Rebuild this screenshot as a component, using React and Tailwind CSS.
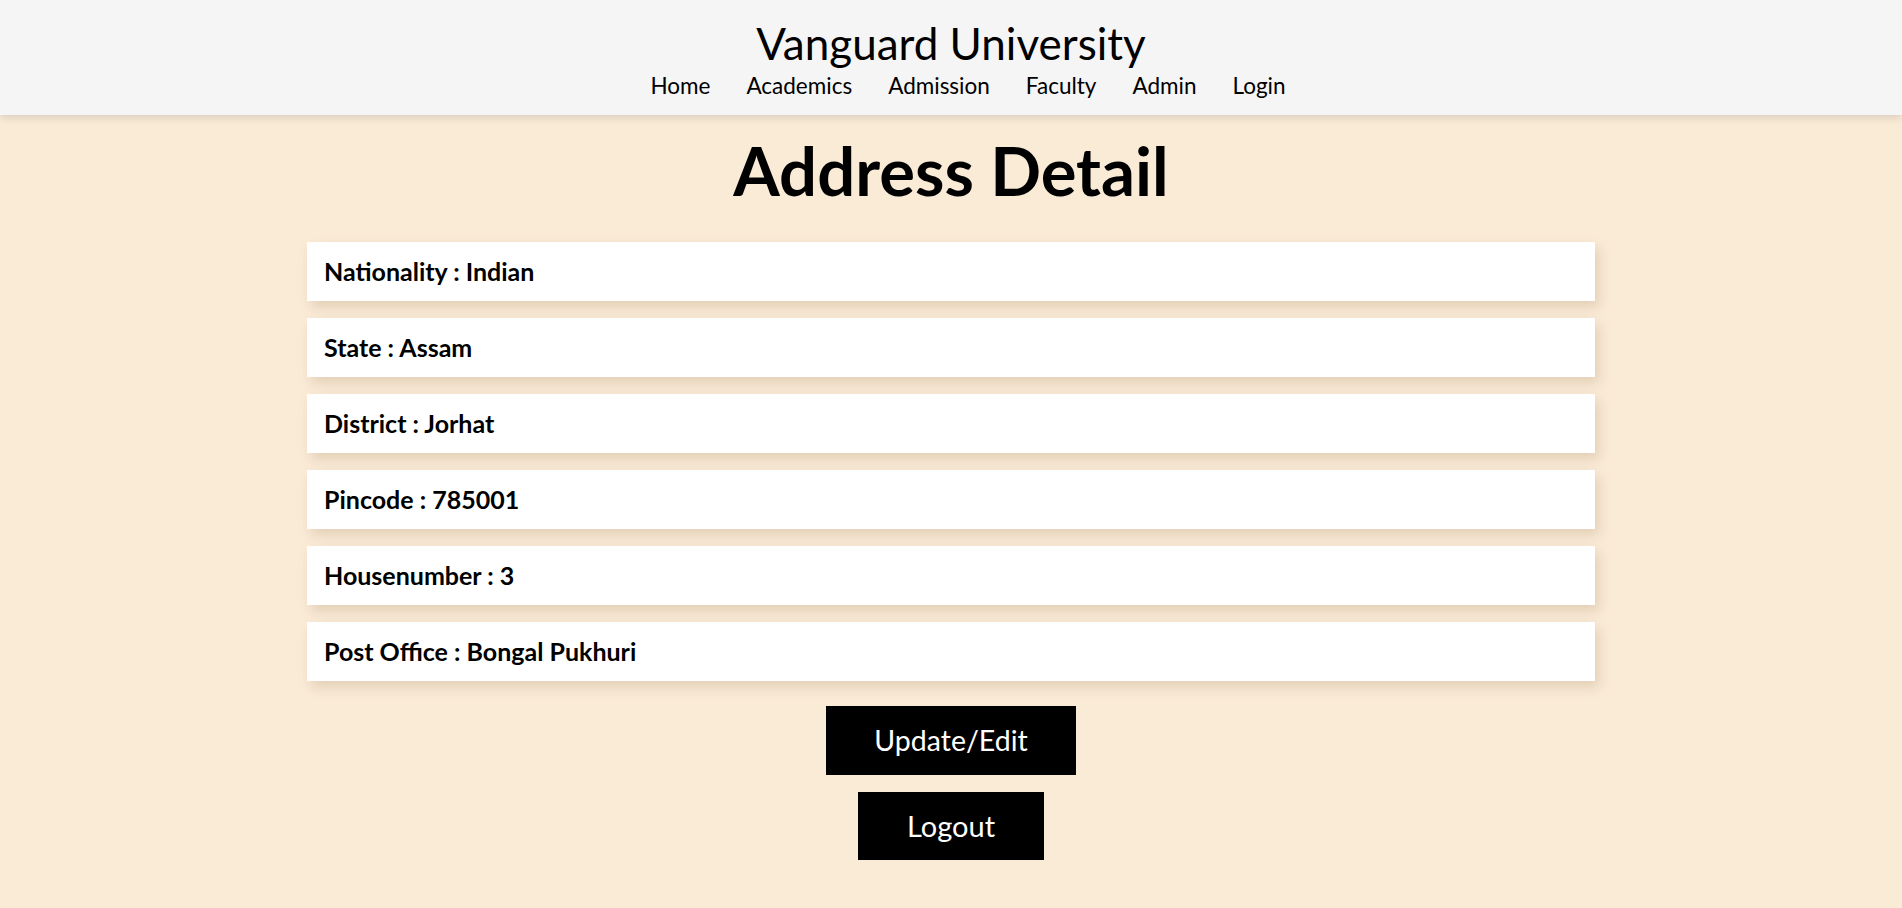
import React from 'react';

const rows = [
  ['Nationality', 'Indian'],
  ['State', 'Assam'],
  ['District', 'Jorhat'],
  ['Pincode', '785001'],
  ['Housenumber', '3'],
  ['Post Office', 'Bongal Pukhuri'],
];

const nav = ['Home', 'Academics', 'Admission', 'Faculty', 'Admin', 'Login'];

export default function App() {
  return (
    <div className="min-h-screen bg-[#faebd7] text-black font-['Lato','Open_Sans',sans-serif]">
      {/* Header */}
      <header className="h-[115px] bg-[#f5f5f5] shadow-[0_3px_8px_rgba(0,0,0,0.12)] flex flex-col items-center">
        <h1 className="mt-[21px] text-[44px] leading-none">Vanguard University</h1>
        <nav className="mt-[10px] pl-[34px] flex gap-[36px] text-[22.5px] leading-none">
          {nav.map((item) => (
            <a key={item} href="#" className="text-black">
              {item}
            </a>
          ))}
        </nav>
      </header>

      <main className="flex flex-col items-center">
        <h2 className="mt-[22px] text-[67px] font-bold leading-none">Address Detail</h2>

        <div className="mt-[38px] w-[1288px] flex flex-col gap-[17px]">
          {rows.map(([label, value]) => (
            <div
              key={label}
              className="h-[59px] bg-white flex items-center px-[17px] shadow-[4px_6px_12px_rgba(120,80,30,0.18)]"
            >
              <span className="text-[25px] font-bold">
                {label} : {value}
              </span>
            </div>
          ))}
        </div>

        <button className="mt-[25px] h-[69px] px-[48px] bg-black text-white text-[28.5px]">Update/Edit</button>
        <button className="mt-[17px] h-[68px] px-[49px] bg-black text-white text-[29px]">Logout</button>
      </main>
    </div>
  );
}
